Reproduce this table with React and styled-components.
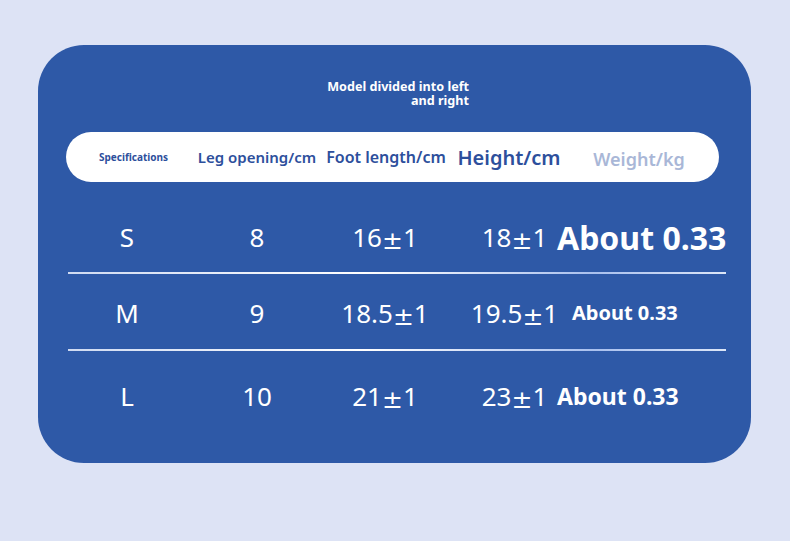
import React from "react";
import styled, { createGlobalStyle } from "styled-components";

const GlobalStyle = createGlobalStyle`
  html, body {
    margin: 0;
    padding: 0;
    background: #dde3f5;
    font-family: "Noto Sans", "Open Sans", sans-serif;
  }
`;

const Page = styled.div`
  width: 790px;
  height: 541px;
  padding-top: 45px;
  box-sizing: border-box;
`;

const Card = styled.div`
  width: 713px;
  height: 418px;
  margin-left: 38px;
  box-sizing: border-box;
  padding: 35px 28px 0 28px;
  background: #2e59a7;
  border-radius: 46px;
  display: flex;
  flex-direction: column;
`;

const Title = styled.div`
  align-self: center;
  width: 148px;
  margin-left: 1px;
  text-align: right;
  color: #ffffff;
  font-size: 12.6px;
  font-weight: 700;
  line-height: 14px;
`;

const HeaderPill = styled.div`
  margin-top: 24px;
  width: 653px;
  height: 50px;
  border-radius: 25px;
  background: #ffffff;
  display: grid;
  grid-template-columns: 135px 112px 146px 100px 1fr;
  align-items: center;
`;

const HeadCell = styled.div`
  display: flex;
  justify-content: center;
  white-space: nowrap;
  font-size: ${(p) => p.size}px;
  font-weight: ${(p) => p.weight || 600};
  color: ${(p) => (p.muted ? "#a9b7d7" : "#2d4f9c")};
  padding-top: ${(p) => p.lift || 0}px;
`;

const Rows = styled.div`
  margin: 20px -3px 0 2px;
`;

const Row = styled.div`
  height: ${(p) => p.h}px;
  padding-top: ${(p) => p.top || 0}px;
  box-sizing: border-box;
  display: grid;
  grid-template-columns: 118px 142px 114px 115px 1fr;
  align-items: center;
  color: #ffffff;
`;

const Divider = styled.div`
  height: 2px;
  background: linear-gradient(
    90deg,
    rgba(225, 233, 250, 0.9) 0%,
    #ffffff 45%,
    #a9c0ee 80%,
    rgba(230, 238, 252, 0.95) 100%
  );
`;

const Value = styled.div`
  display: flex;
  justify-content: center;
  align-items: baseline;
  white-space: nowrap;
  font-size: 26px;
  font-weight: 400;
  padding-left: ${(p) => p.pad || 0}px;
`;

const PlusMinus = styled.span`
  font-family: "DejaVu Sans", sans-serif;
  font-size: 25px;
  vertical-align: -2px;
  transform: translateY(2px);
`;

const Weight = styled.div`
  white-space: nowrap;
  font-size: ${(p) => p.size}px;
  font-weight: 700;
  padding-left: ${(p) => p.pad || 0}px;
`;

const sizes = [
  { size: "S", leg: "8", foot: ["16", "1"], height: ["18", "1"], weight: 32, pad: 0, h: 70, top: 0 },
  { size: "M", leg: "9", foot: ["18.5", "1"], height: ["19.5", "1"], weight: 20, pad: 15, h: 75, top: 2 },
  { size: "L", leg: "10", foot: ["21", "1"], height: ["23", "1"], weight: 23, pad: 0, h: 90, top: 0 },
];

const Tolerance = ({ value }) => (
  <>
    {value[0]}
    <PlusMinus>±</PlusMinus>
    {value[1]}
  </>
);

export default function App() {
  return (
    <Page>
      <GlobalStyle />
      <Card>
        <Title>Model divided into left and right</Title>
        <HeaderPill>
          <HeadCell size={10} weight={700}>Specifications</HeadCell>
          <HeadCell size={15}>Leg opening/cm</HeadCell>
          <HeadCell size={16}>Foot length/cm</HeadCell>
          <HeadCell size={20}>Height/cm</HeadCell>
          <HeadCell size={18} muted lift={4}>Weight/kg</HeadCell>
        </HeaderPill>
        <Rows>
          {sizes.map((r, i) => (
            <React.Fragment key={r.size}>
              <Row h={r.h} top={r.top}>
                <Value>{r.size}</Value>
                <Value>{r.leg}</Value>
                <Value>
                  <Tolerance value={r.foot} />
                </Value>
                <Value pad={30}>
                  <Tolerance value={r.height} />
                </Value>
                <Weight size={r.weight} pad={r.pad}>About 0.33</Weight>
              </Row>
              {i < sizes.length - 1 && <Divider />}
            </React.Fragment>
          ))}
        </Rows>
      </Card>
    </Page>
  );
}
